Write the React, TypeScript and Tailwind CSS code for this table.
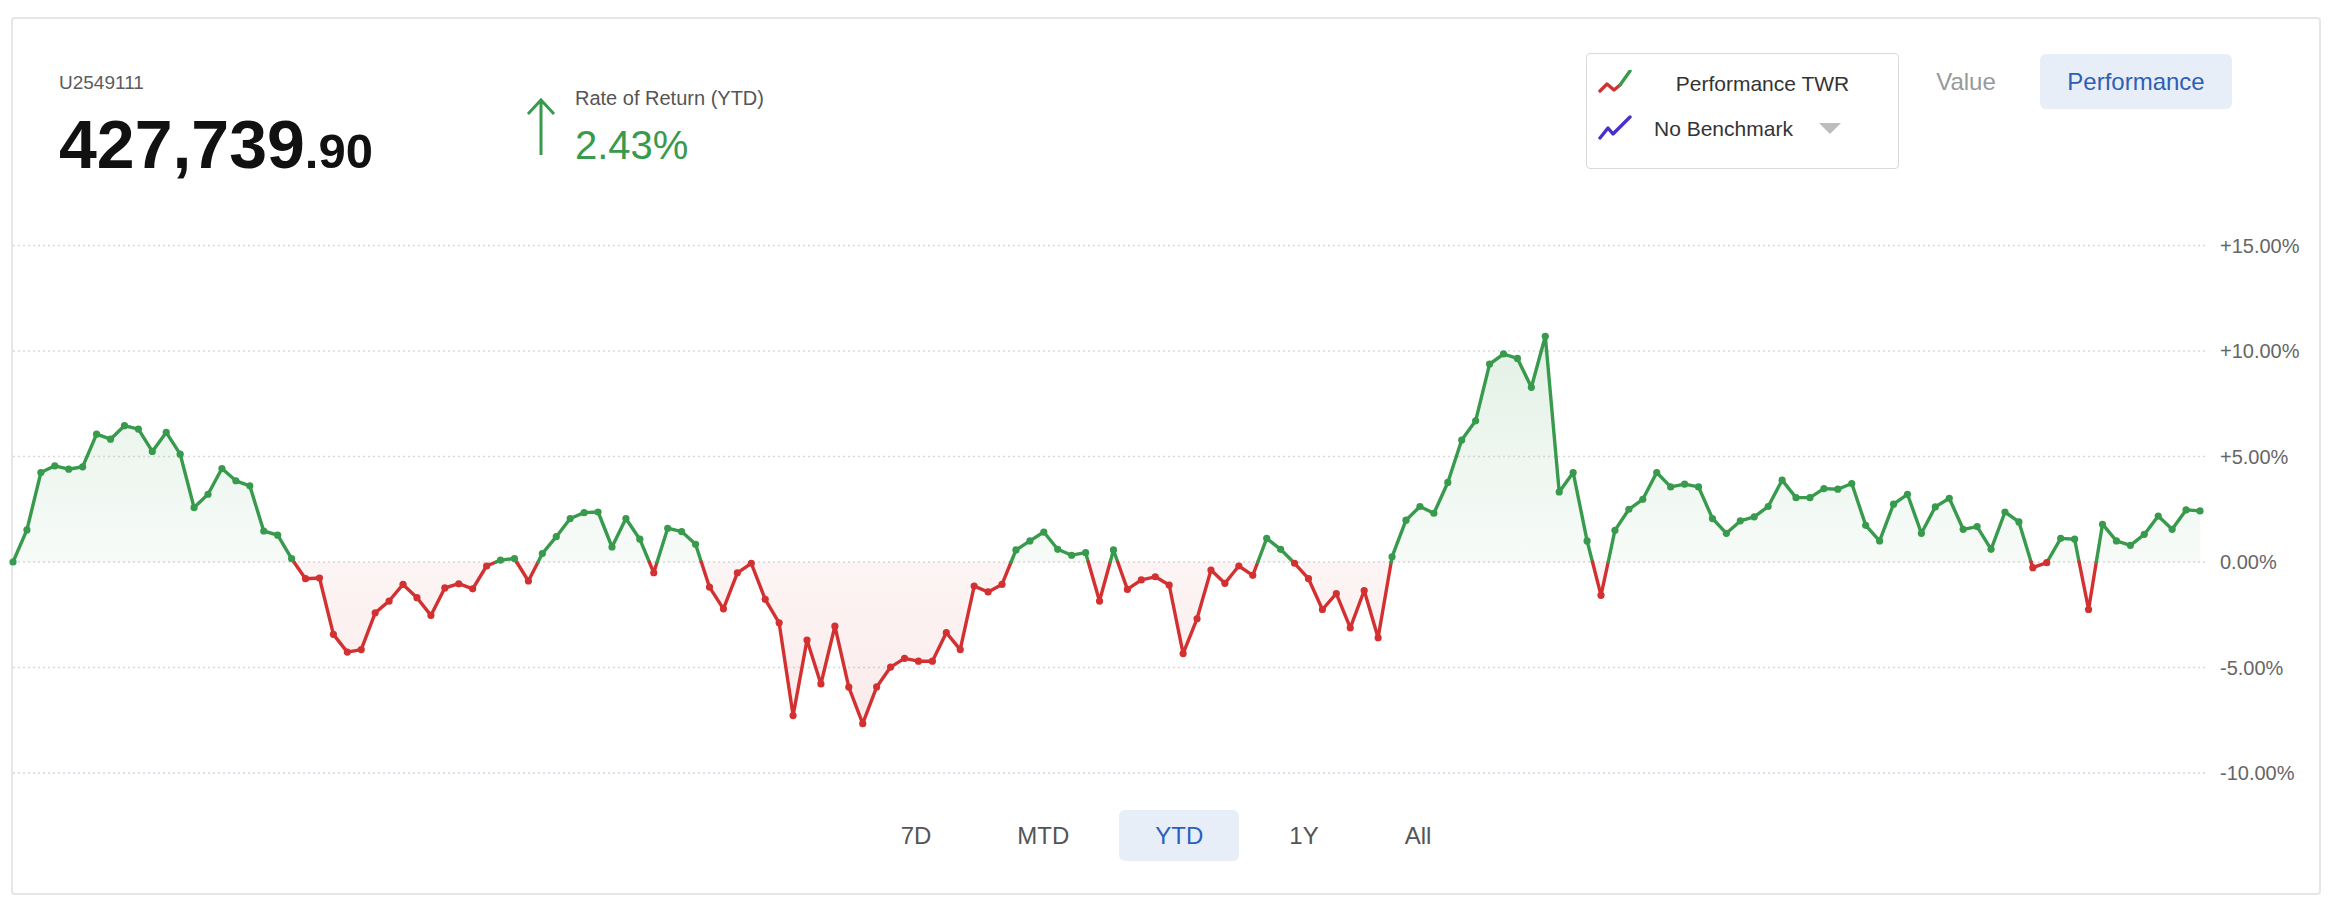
import React from "react";

// TWR performance, % per trading day (YTD)
const DATA = [
  0.0, 1.52, 4.24, 4.56, 4.4, 4.51, 6.06, 5.82, 6.46, 6.3, 5.24, 6.14, 5.11, 2.58, 3.21, 4.43, 3.85, 3.61, 1.47, 1.27,
  0.16, -0.79, -0.76, -3.43, -4.27, -4.15, -2.41, -1.85, -1.06, -1.69, -2.53, -1.23, -1.03, -1.27, -0.19, 0.09, 0.16, -0.9, 0.4, 1.2,
  2.06, 2.34, 2.37, 0.71, 2.06, 1.08, -0.51, 1.6, 1.44, 0.84, -1.19, -2.22, -0.51, -0.06, -1.77, -2.88, -7.28, -3.7, -5.78, -3.04,
  -5.93, -7.66, -5.92, -4.98, -4.57, -4.7, -4.7, -3.35, -4.15, -1.14, -1.42, -1.06, 0.57, 1.0, 1.42, 0.6, 0.32, 0.44, -1.85, 0.57,
  -1.3, -0.85, -0.7, -1.09, -4.34, -2.69, -0.38, -1.01, -0.19, -0.63, 1.12, 0.6, -0.06, -0.79, -2.25, -1.5, -3.12, -1.35, -3.59, 0.25,
  1.98, 2.63, 2.31, 3.77, 5.78, 6.69, 9.38, 9.86, 9.65, 8.28, 10.7, 3.32, 4.24, 1.0, -1.58, 1.5, 2.5, 2.97, 4.24, 3.56,
  3.69, 3.56, 2.06, 1.36, 1.95, 2.14, 2.63, 3.88, 3.05, 3.05, 3.48, 3.45, 3.72, 1.74, 1.0, 2.74, 3.21, 1.36, 2.61, 3.02,
  1.55, 1.68, 0.6, 2.37, 1.9, -0.27, -0.03, 1.12, 1.08, -2.25, 1.79, 1.0, 0.79, 1.31, 2.18, 1.55, 2.47, 2.42,
];

const GREEN = "#389a4c";
const RED = "#d33131";
const LAST_X = 2187;
const Y0 = 362;
const PX_PER_PCT = 21.1;

const xOf = (i: number) => (i * LAST_X) / (DATA.length - 1);
const yOf = (v: number) => Y0 - v * PX_PER_PCT;

type Pt = [number, number];
type Run = { pos: boolean; pts: Pt[] };

// split the series where it crosses 0 so each side gets its own colour
function splitRuns(): Run[] {
  const out: Run[] = [];
  let cur: Run | null = null;
  DATA.forEach((v, i) => {
    const pos = v >= 0;
    const p: Pt = [xOf(i), yOf(v)];
    if (!cur) {
      cur = { pos, pts: [p] };
      return;
    }
    if (pos !== cur.pos) {
      const pv = DATA[i - 1];
      const t = pv / (pv - v);
      const c: Pt = [xOf(i - 1) + t * (xOf(i) - xOf(i - 1)), Y0];
      cur.pts.push(c);
      out.push(cur);
      cur = { pos, pts: [c, p] };
    } else {
      cur.pts.push(p);
    }
  });
  if (cur) out.push(cur);
  return out;
}

const GRID = [
  { v: 15, label: "+15.00%" },
  { v: 10, label: "+10.00%" },
  { v: 5, label: "+5.00%" },
  { v: 0, label: "0.00%" },
  { v: -5, label: "-5.00%" },
  { v: -10, label: "-10.00%" },
];

function Chart() {
  const runs = splitRuns();
  const toStr = (pts: Pt[]) => pts.map((p) => `${p[0].toFixed(1)},${p[1].toFixed(1)}`).join(" ");
  return (
    <svg className="block h-[600px] w-[2306px] overflow-visible" viewBox="0 0 2306 600">
      <defs>
        <linearGradient id="gPos" gradientUnits="userSpaceOnUse" x1="0" y1={yOf(10.7)} x2="0" y2={Y0}>
          <stop offset="0" stopColor={GREEN} stopOpacity="0.14" />
          <stop offset="1" stopColor={GREEN} stopOpacity="0.04" />
        </linearGradient>
        <linearGradient id="gNeg" gradientUnits="userSpaceOnUse" x1="0" y1={Y0} x2="0" y2={yOf(-7.7)}>
          <stop offset="0" stopColor={RED} stopOpacity="0.05" />
          <stop offset="1" stopColor={RED} stopOpacity="0.1" />
        </linearGradient>
      </defs>
      {GRID.map((g) => (
        <g key={g.v}>
          <line
            x1="0"
            x2="2193"
            y1={yOf(g.v)}
            y2={yOf(g.v)}
            stroke={g.v === -10 ? "#ccd6eb" : "#d9d9d9"}
            strokeWidth="1.3"
            strokeDasharray="2 3"
          />
          <text
            x="2207"
            y={yOf(g.v)}
            dominantBaseline="central"
            fontSize="20"
            fill="#666"
            fontFamily="'Liberation Sans', Arial, sans-serif"
          >
            {g.label}
          </text>
        </g>
      ))}
      {runs.map((r, k) => {
        const first = r.pts[0];
        const last = r.pts[r.pts.length - 1];
        const area = [...r.pts, [last[0], Y0] as Pt, [first[0], Y0] as Pt];
        return <polygon key={"a" + k} points={toStr(area)} fill={r.pos ? "url(#gPos)" : "url(#gNeg)"} />;
      })}
      {runs.map((r, k) => (
        <polyline
          key={"l" + k}
          points={toStr(r.pts)}
          fill="none"
          stroke={r.pos ? GREEN : RED}
          strokeWidth="3.4"
          strokeLinejoin="round"
          strokeLinecap="round"
        />
      ))}
      {DATA.map((v, i) => (
        <circle key={i} cx={xOf(i)} cy={yOf(v)} r="3.6" fill={v >= 0 ? GREEN : RED} />
      ))}
    </svg>
  );
}

function ZigIcon({ purple }: { purple?: boolean }) {
  return (
    <svg className="h-[27px] w-[34px]" viewBox="0 0 34 27">
      {purple ? (
        <polyline points="2,23 10,13 15,19 32,2" fill="none" stroke="#4a2fc9" strokeWidth="3.4" strokeLinecap="round" strokeLinejoin="round" />
      ) : (
        <>
          <polyline points="2,21 9,14 16,20 22,15" fill="none" stroke="#d33131" strokeWidth="3.4" strokeLinecap="round" strokeLinejoin="round" />
          <polyline points="22,15 32,1" fill="none" stroke="#389a4c" strokeWidth="3.4" strokeLinecap="round" />
        </>
      )}
    </svg>
  );
}

export default function App() {
  const periods = ["7D", "MTD", "YTD", "1Y", "All"];
  return (
    <div className="h-[908px] w-[2340px] bg-white pl-[11px] pt-[17px] font-['Liberation_Sans',Arial,sans-serif]">
      <div className="flex h-[878px] w-[2310px] flex-col rounded-[4px] border-2 border-[#e6e6e6] pb-[32px]">
        <div className="flex h-[181px] items-start">
          <div className="ml-[46px] mt-[52px] flex w-[467px] flex-col">
            <div className="text-[19px] leading-[23px] text-[#5c5c5c]">U2549111</div>
            <div className="mt-[16px] flex items-baseline leading-[68px] text-[#111]">
              <span className="text-[68px] font-bold">427,739</span>
              <span className="text-[49px] font-semibold">.90</span>
            </div>
          </div>
          <div className="flex items-start">
            <svg className="mt-[78px] h-[60px] w-[30px]" viewBox="0 0 30 60">
              <path d="M15 58V3M2 17L15 3L28 17" fill="none" stroke="#389a4c" strokeWidth="3" />
            </svg>
            <div className="ml-[19px] mt-[67px] flex flex-col">
              <div className="text-[20px] leading-[24px] text-[#555]">Rate of Return (YTD)</div>
              <div className="mt-[15px] text-[40px] leading-[40px] text-[#389a4c]">2.43%</div>
            </div>
          </div>
          <div className="ml-auto mr-[87px] mt-[34px] flex items-start">
            <div className="flex h-[116px] w-[313px] flex-col rounded-[4px] border border-[#d9d9d9] pl-[11px] pt-[16px]">
              <div className="flex h-[27px] items-center">
                <ZigIcon />
                <div className="ml-[22px] w-[217px] text-center text-[21px] text-[#333]">Performance TWR</div>
              </div>
              <div className="mt-[18px] flex h-[27px] items-center">
                <ZigIcon purple />
                <div className="ml-[22px] text-[21px] text-[#333]">No Benchmark</div>
                <svg className="ml-[26px] h-[11px] w-[22px]" viewBox="0 0 22 11">
                  <polygon points="0,0 22,0 11,11" fill="#bdbdbd" />
                </svg>
              </div>
            </div>
            <button className="ml-[9px] mt-[1px] flex h-[55px] w-[116px] items-center justify-center text-[24px] text-[#999]">
              Value
            </button>
            <button className="ml-[16px] mt-[1px] flex h-[55px] w-[192px] items-center justify-center rounded-[6px] bg-[#e8eef7] text-[24px] text-[#2d5fb5]">
              Performance
            </button>
          </div>
        </div>
        <Chart />
        <div className="mt-[10px] flex justify-center gap-[14px]">
          {periods.map((p) => (
            <button
              key={p}
              className={
                p === "YTD"
                  ? "h-[51px] rounded-[6px] bg-[#e8eef7] px-[36px] text-[24px] text-[#2d5fc0]"
                  : "h-[51px] rounded-[6px] px-[36px] text-[24px] text-[#555]"
              }
            >
              {p}
            </button>
          ))}
        </div>
      </div>
    </div>
  );
}
